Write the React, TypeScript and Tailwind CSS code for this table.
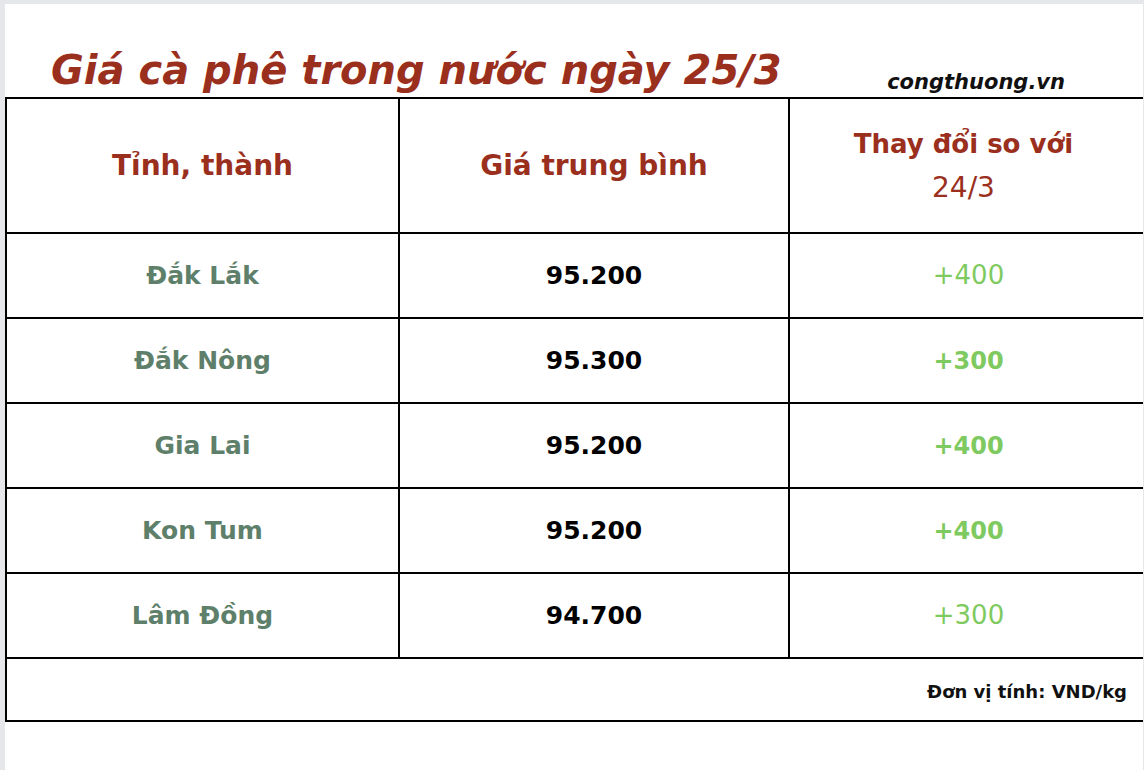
import React from "react";

const rows = [
  { name: "Đắk Lắk", price: "95.200", change: "+400", bold: false },
  { name: "Đắk Nông", price: "95.300", change: "+300", bold: true },
  { name: "Gia Lai", price: "95.200", change: "+400", bold: true },
  { name: "Kon Tum", price: "95.200", change: "+400", bold: true },
  { name: "Lâm Đồng", price: "94.700", change: "+300", bold: false },
];

export default function App() {
  return (
    <div
      className="w-[1144px] h-[770px] bg-[#e6e7ea] pl-[5px] pt-[4px] pr-[1px] overflow-hidden"
      style={{ fontFamily: '"DejaVu Sans", "Noto Sans", sans-serif' }}
    >
      <div className="bg-white h-full">
        <div className="h-[93px] flex items-end">
          <h1 className="ml-[46px] mb-[7px] text-[40px] leading-none font-bold italic text-[#9b2f1e]">
            Giá cà phê trong nước ngày 25/3
          </h1>
          <div className="ml-auto mr-[78px] mb-[4px] text-[21px] leading-none font-bold italic text-[#111]">
            congthuong.vn
          </div>
        </div>
        <div className="border-t-2 border-l-2 border-black">
          <div className="flex h-[135px] border-b-2 border-black">
            <div className="w-[393px] border-r-2 border-black flex items-center justify-center text-[28px] font-bold text-[#9b2f1e]">
              Tỉnh, thành
            </div>
            <div className="w-[390px] border-r-2 border-black flex items-center justify-center text-[28px] font-bold text-[#9b2f1e]">
              Giá trung bình
            </div>
            <div className="flex-1 flex flex-col items-center justify-center leading-[44px] text-[#9b2f1e] pr-[6px]">
              <span className="font-bold text-[26px]">Thay đổi so với</span>
              <span className="text-[28px]">24/3</span>
            </div>
          </div>
          {rows.map((r) => (
            <div key={r.name} className="flex h-[85px] border-b-2 border-black">
              <div className="w-[393px] border-r-2 border-black flex items-center justify-center text-[25px] font-bold text-[#5e806a]">
                {r.name}
              </div>
              <div className="w-[390px] border-r-2 border-black flex items-center justify-center text-[25px] font-bold text-black">
                {r.price}
              </div>
              <div
                className={
                  "flex-1 flex items-center justify-center text-[#7fca60] pl-[4px] " +
                  (r.bold ? "font-bold text-[24px]" : "font-normal text-[26px]")
                }
              >
                {r.change}
              </div>
            </div>
          ))}
          <div className="h-[63px] border-b-2 border-black flex items-center justify-end pr-[16px] pt-[4px]">
            <span className="text-[18px] font-bold text-[#111]">Đơn vị tính: VND/kg</span>
          </div>
        </div>
      </div>
    </div>
  );
}
